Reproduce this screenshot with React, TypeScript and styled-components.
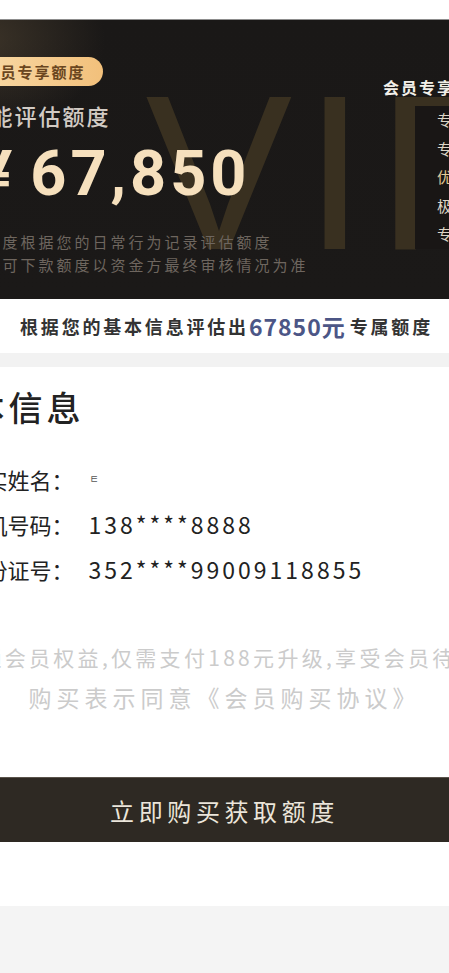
import React from "react";
import styled, { createGlobalStyle } from "styled-components";

const GlobalStyle = createGlobalStyle`
  html, body {
    margin: 0;
    padding: 0;
    background: #ffffff;
    overflow-x: hidden;
  }
  body {
    font-family: "Noto Sans CJK SC", "Noto Sans", sans-serif;
  }
`;

const Viewport = styled.div`
  display: flex;
  justify-content: center;
  width: 100%;
  overflow: hidden;
`;

const Page = styled.div`
  flex: 0 0 600px;
  width: 600px;
  display: flex;
  flex-direction: column;
`;

const TopGap = styled.div`
  height: 19px;
  background: #ffffff;
`;

const Card = styled.section`
  position: relative;
  box-sizing: border-box;
  height: 280px;
  border-top: 1px solid #8d8d8d;
  padding-left: 42px;
  display: flex;
  justify-content: space-between;
  overflow: hidden;
  background:
    radial-gradient(ellipse 120px 90px at 60px 20px, rgba(120, 100, 70, 0.35), transparent),
    linear-gradient(180deg, #1a1817 0%, #1b1918 100%);
`;

const Watermark = styled.span`
  position: absolute;
  left: 221px;
  top: 43px;
  font-family: "Liberation Sans", Arial, sans-serif;
  font-size: 220px;
  line-height: 1;
  letter-spacing: 12px;
  color: #393020;
  z-index: 0;
  pointer-events: none;
`;

const LeftColumn = styled.div`
  position: relative;
  z-index: 1;
  padding-top: 37px;
  display: flex;
  flex-direction: column;
  align-items: flex-start;
`;

const Badge = styled.span`
  display: inline-flex;
  align-items: center;
  height: 29px;
  padding: 0 17px;
  border-radius: 15px;
  background: linear-gradient(90deg, #f9dcaa, #f2c07b);
  color: #6a4620;
  font-size: 15px;
  font-weight: 700;
  letter-spacing: 2px;
  white-space: nowrap;
`;

const QuotaTitle = styled.div`
  margin-top: 14px;
  font-size: 22px;
  line-height: 30px;
  font-weight: 500;
  letter-spacing: 2px;
  color: #d2cbc4;
  white-space: nowrap;
`;

const Amount = styled.div`
  margin-top: 12px;
  font-family: Roboto, "Liberation Sans", sans-serif;
  font-weight: 700;
  font-size: 63px;
  line-height: 63px;
  letter-spacing: 4px;
  color: #f6e0bd;
  white-space: nowrap;
`;

const Currency = styled.span`
  margin-left: 12px;
  margin-right: 14px;
`;

const Hint = styled.div`
  margin-top: 25px;
  font-size: 15px;
  line-height: 23px;
  letter-spacing: 3px;
  color: #6e665f;
  white-space: nowrap;
`;

const RightColumn = styled.div`
  position: relative;
  z-index: 1;
  flex: 0 0 141.5px;
  padding-top: 57px;
  display: flex;
  flex-direction: column;
`;

const PerkHeading = styled.div`
  font-size: 16px;
  line-height: 20px;
  font-weight: 700;
  letter-spacing: 2px;
  color: #f2efe9;
  white-space: nowrap;
`;

const PerkBox = styled.ul`
  margin: 9px 0 0 32px;
  padding: 0 0 0 22px;
  list-style: none;
  background: #191615;
`;

const Perk = styled.li<{ $gold?: boolean }>`
  font-size: 15px;
  line-height: 28.5px;
  color: ${(p) => (p.$gold ? "#e4cc98" : "#ddd5c6")};
  white-space: nowrap;
`;

const Summary = styled.div`
  height: 54px;
  display: flex;
  align-items: center;
  justify-content: center;
  padding-left: 4px;
  background: #ffffff;
  font-size: 18px;
  font-weight: 700;
  letter-spacing: 2.8px;
  color: #333333;
  white-space: nowrap;
`;

const SummaryAmount = styled.span`
  margin: 0 4px 0 0;
  font-size: 23px;
  font-weight: 700;
  letter-spacing: 1px;
  color: #4c5686;
`;

const Divider = styled.div`
  height: 14px;
  background: #f2f2f2;
`;

const InfoSection = styled.section`
  background: #ffffff;
  padding: 20px 0 64px;
  display: flex;
  flex-direction: column;
`;

const InfoTitle = styled.h2`
  margin: 0;
  padding-left: 8px;
  font-size: 34px;
  line-height: 40px;
  font-weight: 500;
  letter-spacing: 4px;
  color: #222222;
`;

const Rows = styled.div`
  margin-top: 29px;
  padding-left: 39px;
  display: flex;
  flex-direction: column;
`;

const Row = styled.div`
  display: flex;
  align-items: center;
  height: 45px;
  font-size: 22px;
  color: #222222;
  white-space: nowrap;
`;

const Label = styled.span`
  width: 110px;
`;

const Value = styled.span`
  margin-left: 15px;
  font-size: 23px;
  letter-spacing: 3px;
`;

const Masked = styled.span`
  margin-left: 16px;
  font-size: 10px;
  color: #555555;
`;

const Notes = styled.div`
  margin-top: 50px;
  display: flex;
  flex-direction: column;
  align-items: center;
  color: #cbcbcb;
  white-space: nowrap;
`;

const NoteLine = styled.div<{ $large?: boolean }>`
  font-size: ${(p) => (p.$large ? "23px" : "21px")};
  line-height: ${(p) => (p.$large ? "34px" : "32px")};
  letter-spacing: ${(p) => (p.$large ? "5px" : "3.3px")};
  margin-top: ${(p) => (p.$large ? "7px" : "0")};
  margin-right: ${(p) => (p.$large ? "0" : "12px")};
`;

const BuyButton = styled.button`
  display: block;
  margin: 63px 20px 0;
  height: 65px;
  border: none;
  border-top: 1px solid #5a534b;
  background: #2e2923;
  color: #ebe5da;
  font-family: "Noto Sans CJK SC", sans-serif;
  font-size: 24px;
  letter-spacing: 4.6px;
  cursor: pointer;
`;

const Footer = styled.div`
  min-height: 120px;
  background: #f4f4f4;
`;

const perks = [
  { text: "专属客服", gold: false },
  { text: "专享额度", gold: false },
  { text: "优先放款", gold: true },
  { text: "极速审核", gold: false },
  { text: "专属利率", gold: false },
];

export default function App() {
  return (
    <>
      <GlobalStyle />
      <Viewport>
        <Page>
          <TopGap />
          <Card>
            <Watermark>VIP</Watermark>
            <LeftColumn>
              <Badge>会员专享额度</Badge>
              <QuotaTitle>智能评估额度</QuotaTitle>
              <Amount>
                <Currency>¥</Currency>67,850
              </Amount>
              <Hint>
                该额度根据您的日常行为记录评估额度
                <br />
                实际可下款额度以资金方最终审核情况为准
              </Hint>
            </LeftColumn>
            <RightColumn>
              <PerkHeading>会员专享特权</PerkHeading>
              <PerkBox>
                {perks.map((p) => (
                  <Perk key={p.text} $gold={p.gold}>
                    {p.text}
                  </Perk>
                ))}
              </PerkBox>
            </RightColumn>
          </Card>
          <Summary>
            根据您的基本信息评估出
            <SummaryAmount>67850元</SummaryAmount>
            专属额度
          </Summary>
          <Divider />
          <InfoSection>
            <InfoTitle>基本信息</InfoTitle>
            <Rows>
              <Row>
                <Label>真实姓名：</Label>
                <Masked>ㅌ</Masked>
              </Row>
              <Row>
                <Label>手机号码：</Label>
                <Value>138****8888</Value>
              </Row>
              <Row>
                <Label>身份证号：</Label>
                <Value>352****99009118855</Value>
              </Row>
            </Rows>
            <Notes>
              <NoteLine>开通会员权益,仅需支付188元升级,享受会员待遇</NoteLine>
              <NoteLine $large>购买表示同意《会员购买协议》</NoteLine>
            </Notes>
            <BuyButton>立即购买获取额度</BuyButton>
          </InfoSection>
          <Footer />
        </Page>
      </Viewport>
    </>
  );
}
